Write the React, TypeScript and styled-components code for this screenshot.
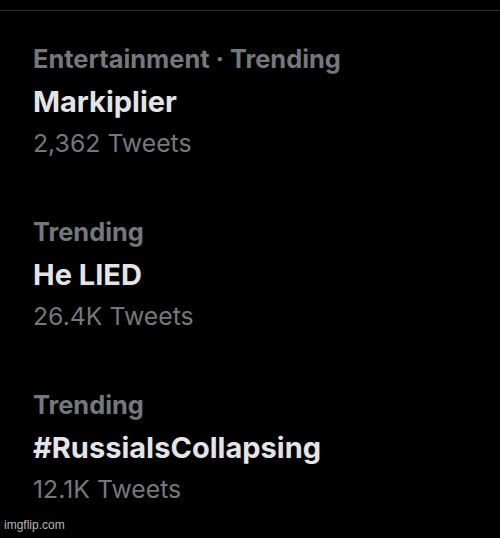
import React from "react";
import styled, { createGlobalStyle } from "styled-components";

const Global = createGlobalStyle`
  html, body { margin: 0; padding: 0; background: #000; }
  body { font-family: Inter, "Liberation Sans", Arial, sans-serif; }
`;

const Page = styled.div`
  width: 500px;
  height: 538px;
  background: #000;
  position: relative;
  overflow: hidden;
  display: flex;
  flex-direction: column;
`;

const TopBar = styled.div`
  height: 10px;
  border-bottom: 1px solid #2a2d30;
  flex-shrink: 0;
`;

const List = styled.div`
  display: flex;
  flex-direction: column;
  gap: 48px;
  padding: 27px 0 0 33px;
`;

const Item = styled.div`
  display: flex;
  flex-direction: column;
`;

const tones = {
  meta: { size: 25.4, lh: 42, weight: 700, color: "#74787c" },
  title: { size: 29, lh: 43, weight: 700, color: "#e2e4e6" },
  count: { size: 24.8, lh: 40, weight: 400, color: "#74787c" },
};

const Line = styled.div<{ $tone: keyof typeof tones }>`
  font-size: ${(p) => tones[p.$tone].size}px;
  line-height: ${(p) => tones[p.$tone].lh}px;
  height: ${(p) => tones[p.$tone].lh}px;
  font-weight: ${(p) => tones[p.$tone].weight};
  color: ${(p) => tones[p.$tone].color};
  white-space: nowrap;
`;

const Watermark = styled.div`
  position: absolute;
  left: 4px;
  bottom: 6px;
  font-family: "Liberation Sans", Arial, sans-serif;
  font-size: 12px;
  color: #b8b8b8;
`;

const trends = [
  { meta: "Entertainment · Trending", title: "Markiplier", count: "2,362 Tweets" },
  { meta: "Trending", title: "He LIED", count: "26.4K Tweets" },
  { meta: "Trending", title: "#RussiaIsCollapsing", count: "12.1K Tweets" },
];

export default function App() {
  return (
    <Page>
      <Global />
      <TopBar />
      <List>
        {trends.map((t) => (
          <Item key={t.title}>
            <Line $tone="meta">{t.meta}</Line>
            <Line $tone="title">{t.title}</Line>
            <Line $tone="count">{t.count}</Line>
          </Item>
        ))}
      </List>
      <Watermark>imgflip.com</Watermark>
    </Page>
  );
}
